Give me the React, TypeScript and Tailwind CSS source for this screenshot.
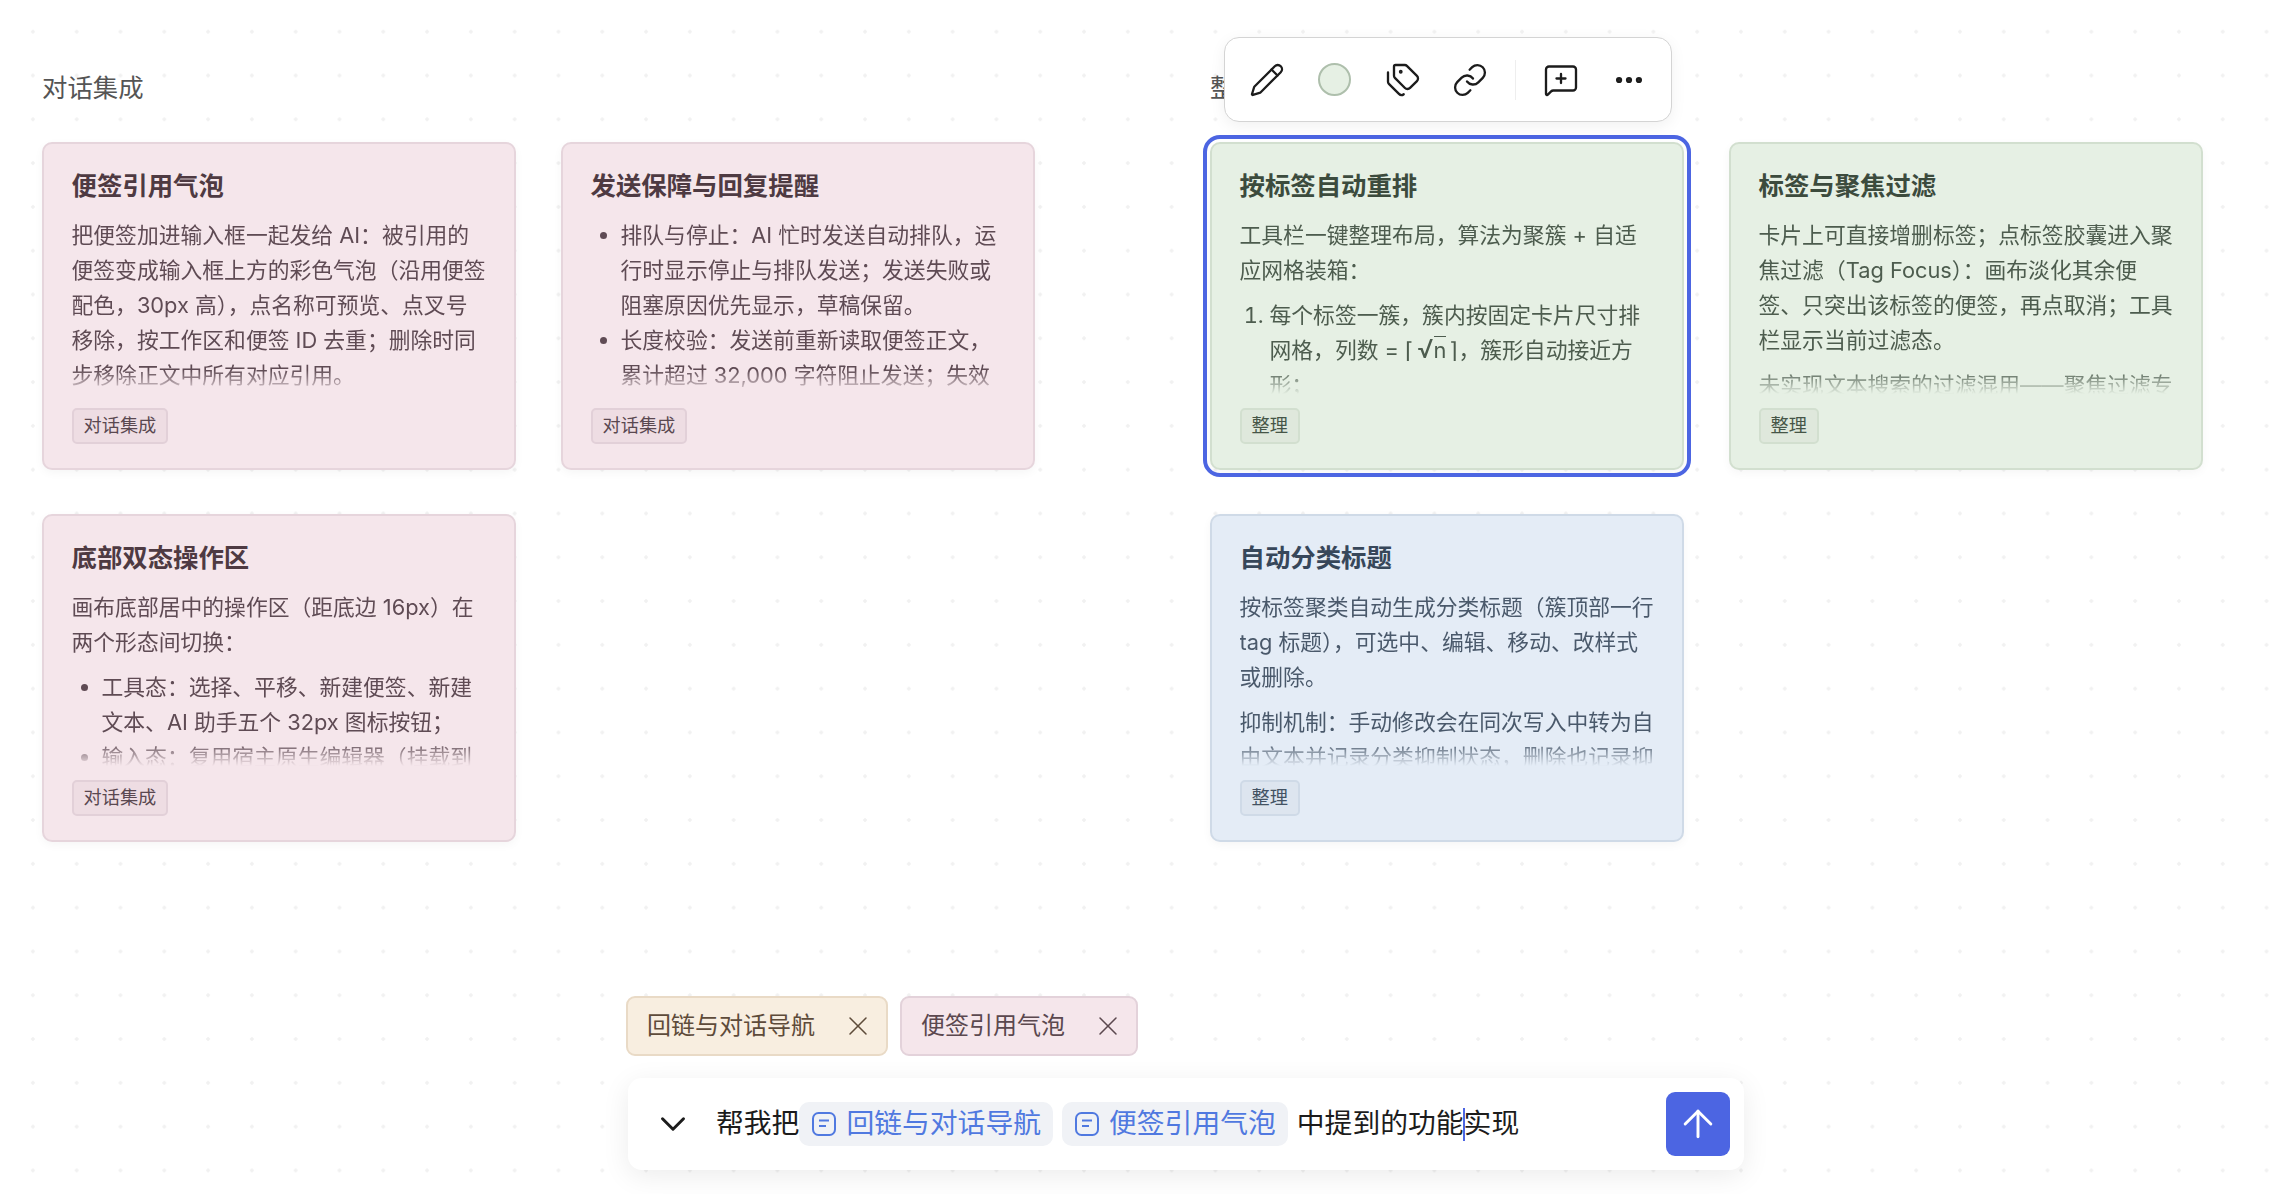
import type { ReactNode } from "react";
import { ArrowUp, ChevronDown, Ellipsis, Link, MessageSquarePlus, Pencil, Tags, X } from "lucide-react";

const tones = {
  pink: {
    card: "bg-[#f5e6eb] border-[#e6d5dc]",
    title: "text-[#4e3a42]",
    body: "text-[#5f4b54]",
    tag: "bg-[#eedde3] border-[#e2d0d8] text-[#5a4850]",
  },
  green: {
    card: "bg-[#e6f0e4] border-[#d2dfcf]",
    title: "text-[#3c4b3d]",
    body: "text-[#4d5c4e]",
    tag: "bg-[#dfe8dc] border-[#d2dfcf] text-[#465547]",
  },
  blue: {
    card: "bg-[#e4ecf6] border-[#cfdae7]",
    title: "text-[#37475a]",
    body: "text-[#4a596b]",
    tag: "bg-[#dde5ef] border-[#cfdae7] text-[#435263]",
  },
};

function Card({
  tone,
  title,
  tag,
  selected,
  children,
}: {
  tone: keyof typeof tones;
  title: string;
  tag: string;
  selected?: boolean;
  children: ReactNode;
}) {
  const t = tones[tone];
  return (
    <div
      className={`flex h-[328px] flex-col rounded-[10px] border-2 pt-[24px] pr-[25.5px] pb-[24px] pl-[27.5px] shadow-[0_3px_10px_rgba(0,0,0,0.04)] ${t.card} ${
        selected ? "outline-[4px] outline-offset-[3px] outline-[#4c65e2]" : ""
      }`}
    >
      <h3 className={`mb-[15px] text-[25.4px] leading-[35px] font-semibold ${t.title}`}>{title}</h3>
      <div
        className={`min-h-0 flex-1 overflow-hidden text-[21.8px] leading-[35px] [mask-image:linear-gradient(to_bottom,#000_calc(100%-24px),transparent)] ${t.body}`}
      >
        {children}
      </div>
      <span className={`mt-[14px] flex h-[36px] items-center self-start rounded-[5px] border-2 px-[10px] text-[18.2px] ${t.tag}`}>
        {tag}
      </span>
    </div>
  );
}

function NoteIcon() {
  return (
    <svg viewBox="0 0 24 24" className="h-[24px] w-[24px] shrink-0" fill="none" stroke="currentColor" strokeWidth="2">
      <rect x="1" y="1" width="22" height="22" rx="5.5" />
      <path d="M7 8.5h10M7 14h7" />
    </svg>
  );
}

function Mention({ children }: { children: ReactNode }) {
  return (
    <span className="flex h-[44px] items-center gap-[10px] rounded-[10px] bg-[#f0f2f6] pr-[12px] pl-[13px] text-[#5079e0]">
      <NoteIcon />
      {children}
    </span>
  );
}

function Toolbar() {
  const cell = "flex h-[68px] w-[68px] items-center justify-center";
  return (
    <div className="absolute top-[37px] left-[1224px] flex h-[85px] w-[448px] items-center rounded-[15px] border-[1.5px] border-[#d4d4d4] bg-white px-[8px] text-[#1c1c1c] shadow-[0_4px_16px_rgba(0,0,0,0.06)]">
      <span className={cell}>
        <Pencil size={36} strokeWidth={1.55} />
      </span>
      <span className={cell}>
        <span className="h-[33px] w-[33px] rounded-full border-2 border-[#aebfac] bg-[#e6f0e4]" />
      </span>
      <span className={cell}>
        <Tags size={36} strokeWidth={1.55} />
      </span>
      <span className={cell}>
        <Link size={36} strokeWidth={1.55} />
      </span>
      <span className="mx-[11px] h-[40px] w-px bg-[#eeeeee]" />
      <span className={cell}>
        <MessageSquarePlus size={36} strokeWidth={1.55} />
      </span>
      <span className={cell}>
        <Ellipsis size={34} strokeWidth={2.4} />
      </span>
    </div>
  );
}

export default function App() {
  return (
    <div
      lang="zh-CN"
      className="relative flex h-[1194px] flex-col overflow-hidden bg-white bg-[radial-gradient(circle,#f1f1f1_1.5px,transparent_2px)] bg-[size:43.8px_43.8px] bg-[position:11px_9.8px] pt-[70px] font-['Inter','Noto_Sans_CJK_SC',sans-serif]"
    >
      <div className="flex gap-[175px] pl-[42px]">
        <section>
          <h2 className="mb-[37px] text-[25.4px] leading-[35px] text-[#555555]">对话集成</h2>
          <div className="grid grid-cols-[474px_474px] gap-x-[45px] gap-y-[44px]">
            <Card tone="pink" title="便签引用气泡" tag="对话集成">
              <p>把便签加进输入框一起发给 AI：被引用的便签变成输入框上方的彩色气泡（沿用便签配色，30px 高），点名称可预览、点叉号移除，按工作区和便签 ID 去重；删除时同步移除正文中所有对应引用。</p>
            </Card>
            <Card tone="pink" title="发送保障与回复提醒" tag="对话集成">
              <ul className="list-disc pl-[30px]">
                <li>排队与停止：AI 忙时发送自动排队，运行时显示停止与排队发送；发送失败或阻塞原因优先显示，草稿保留。</li>
                <li>长度校验：发送前重新读取便签正文，累计超过 32,000 字符阻止发送；失效</li>
              </ul>
            </Card>
            <Card tone="pink" title="底部双态操作区" tag="对话集成">
              <p className="mb-[10px]">画布底部居中的操作区（距底边 16px）在两个形态间切换：</p>
              <ul className="list-disc pl-[30px]">
                <li>工具态：选择、平移、新建便签、新建文本、AI 助手五个 32px 图标按钮；</li>
                <li>输入态：复用宿主原生编辑器（挂载到</li>
              </ul>
            </Card>
          </div>
        </section>
        <section>
          <h2 className="mb-[37px] text-[25.4px] leading-[35px] text-[#555555]">整理</h2>
          <div className="grid grid-cols-[474px_474px] gap-x-[45px] gap-y-[44px]">
            <Card tone="green" title="按标签自动重排" tag="整理" selected>
              <p className="mb-[10px]">工具栏一键整理布局，算法为聚簇 + 自适应网格装箱：</p>
              <ol className="list-decimal pl-[30px]">
                <li>
                  每个标签一簇，簇内按固定卡片尺寸排网格，列数 = ⌈
                  <span className="mx-[3px]">
                    <span className="text-[26px] leading-none">√</span>
                    <span className="border-t border-current">n</span>
                  </span>
                  ⌉，簇形自动接近方形；
                </li>
              </ol>
            </Card>
            <Card tone="green" title="标签与聚焦过滤" tag="整理">
              <p className="mb-[10px]">卡片上可直接增删标签；点标签胶囊进入聚焦过滤（Tag Focus）：画布淡化其余便签、只突出该标签的便签，再点取消；工具栏显示当前过滤态。</p>
              <p>未实现文本搜索的过滤混用——聚焦过滤专</p>
            </Card>
            <Card tone="blue" title="自动分类标题" tag="整理">
              <p className="mb-[10px]">按标签聚类自动生成分类标题（簇顶部一行 tag 标题），可选中、编辑、移动、改样式或删除。</p>
              <p>抑制机制：手动修改会在同次写入中转为自由文本并记录分类抑制状态，删除也记录抑</p>
            </Card>
          </div>
        </section>
      </div>

      <div className="mt-auto mb-[24px] ml-[626px]">
        <div className="mb-[22px] flex gap-[12px] text-[24px]">
          <span className="flex h-[60px] w-[262px] items-center justify-between rounded-[9px] border-2 border-[#e9dac6] bg-[#f8eee0] pr-[12px] pl-[19px] text-[#5e4b3a]">
            回链与对话导航
            <X size={32} strokeWidth={1.15} />
          </span>
          <span className="flex h-[60px] w-[238px] items-center justify-between rounded-[9px] border-2 border-[#e3d2da] bg-[#f5e6eb] pr-[12px] pl-[19px] text-[#5b484f]">
            便签引用气泡
            <X size={32} strokeWidth={1.15} />
          </span>
        </div>
        <div className="ml-[2px] flex h-[92px] w-[1116px] items-center rounded-[14px] bg-white pl-[24px] text-[27.8px] text-[#1c1c1c] shadow-[0_6px_28px_rgba(0,0,0,0.08)]">
          <ChevronDown size={42} strokeWidth={1.7} className="mr-[22px] shrink-0" />
          <span>帮我把</span>
          <Mention>回链与对话导航</Mention>
          <span className="w-[9px]" />
          <Mention>便签引用气泡</Mention>
          <span className="ml-[9px] flex items-center">
            中提到的功能
            <span className="-mx-px h-[33px] w-[2px] bg-[#4c65e2]" />
            实现
          </span>
          <button
            type="button"
            className="mr-[14px] ml-auto flex h-[64px] w-[64px] items-center justify-center rounded-[9px] bg-[#4c65e2] text-white"
          >
            <ArrowUp size={44} strokeWidth={1.6} />
          </button>
        </div>
      </div>

      <Toolbar />
    </div>
  );
}
